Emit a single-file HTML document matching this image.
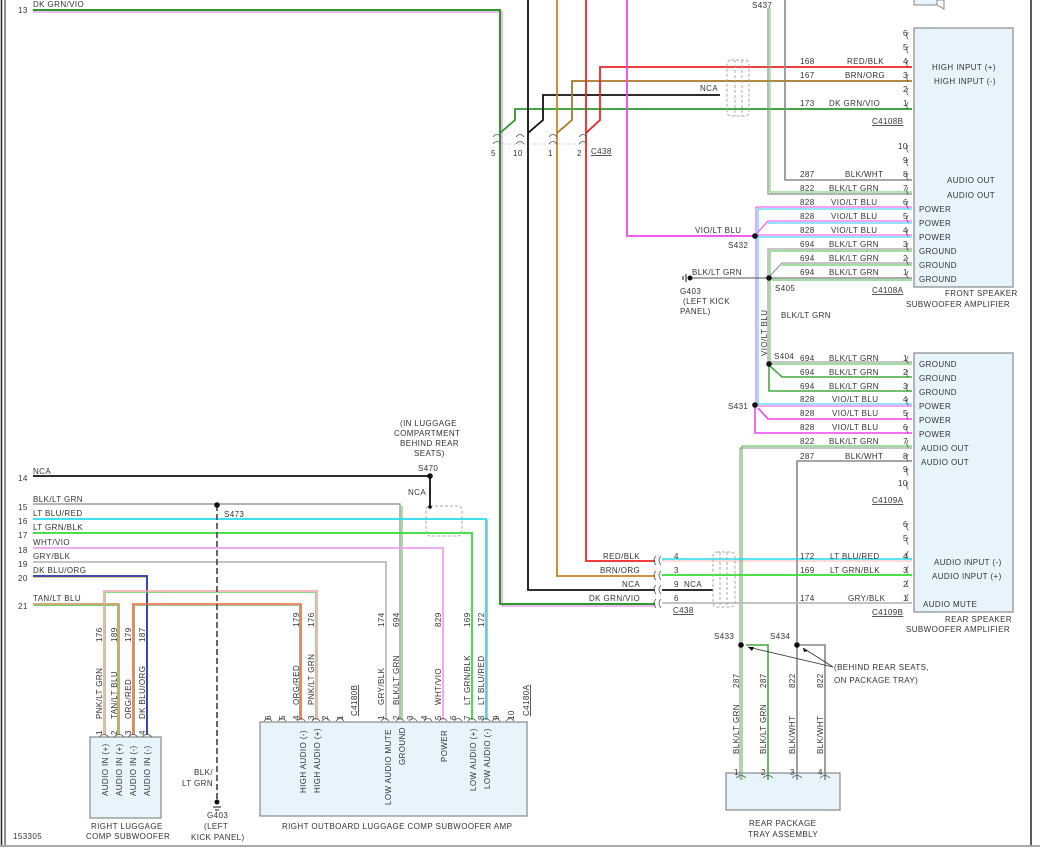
<!DOCTYPE html>
<html><head><meta charset="utf-8"><style>
html,body{margin:0;padding:0;background:#fff;}
svg{display:block;}
text{font-family:"Liberation Sans",sans-serif;font-size:8px;fill:#333;letter-spacing:0.4px;}
.u{text-decoration:underline;}
</style></head><body>
<svg width="1040" height="849" viewBox="0 0 1040 849" xmlns="http://www.w3.org/2000/svg">
<line x1="1.5" y1="0" x2="1.5" y2="846" stroke="#222" stroke-width="1.5"/>
<line x1="5" y1="0" x2="5" y2="846" stroke="#222" stroke-width="1"/>
<line x1="1031" y1="0" x2="1031" y2="846" stroke="#222" stroke-width="1.5"/>
<line x1="0" y1="846" x2="1040" y2="846" stroke="#aaa" stroke-width="2"/>

<rect x="914" y="-1" width="23" height="6" fill="#e8f4fb" stroke="#888"/>
<path d="M937 0 L944 0 L944 9 L937 5 Z" fill="#fff" stroke="#888"/>

<rect x="914" y="28" width="99" height="259" fill="#e8f4fb" stroke="#888" stroke-width="1.2"/>
<rect x="914" y="353" width="99" height="259" fill="#e8f4fb" stroke="#888" stroke-width="1.2"/>
<rect x="726" y="773" width="114" height="37" fill="#e8f4fb" stroke="#888" stroke-width="1.2"/>
<rect x="90" y="737" width="71" height="81" fill="#e8f4fb" stroke="#888" stroke-width="1.2"/>
<rect x="260" y="722" width="267" height="94" fill="#e8f4fb" stroke="#888" stroke-width="1.2"/>

<g fill="none" stroke-linejoin="miter">
<polyline points="33,12 502,12 502,606 655,606" stroke="#e070e0" stroke-width="1"/>
<polyline points="33,10 500,10 500,604 655,604" stroke="#2a9a2a" stroke-width="2"/>
<polyline points="500,133 515,120 515,109 912,109" stroke="#2a9a2a" stroke-width="1.8"/>
<polyline points="528,0 528,590 655,590" stroke="#111" stroke-width="1.8"/>
<polyline points="528,133 543,120 543,95 720,95" stroke="#111" stroke-width="1.8"/>
<polyline points="557,0 557,576 655,576" stroke="#c8841e" stroke-width="1.8"/>
<polyline points="557,133 572,120 572,81 912,81" stroke="#a6782a" stroke-width="1.8"/>
<polyline points="586,0 586,561 655,561" stroke="#ee2222" stroke-width="1.8"/>
<polyline points="586,133 600,120 600,67 912,67" stroke="#ee2222" stroke-width="1.8"/>
<polyline points="627,0 627,236 755,236" stroke="#ee44ee" stroke-width="1.8"/>
<polyline points="768,8 768,194 912,194" stroke="#888" stroke-width="1.2"/>
<polyline points="770,8 770,192 912,192" stroke="#66cc66" stroke-width="1"/>
<polyline points="785,0 785,180 912,180" stroke="#888" stroke-width="1.6"/>
<polyline points="756,405 756,207 912,207" stroke="#ee44ee" stroke-width="1"/>
<polyline points="758,405 758,209 912,209" stroke="#22ccee" stroke-width="1"/>
<polyline points="757,233 768,221 912,221" stroke="#ee44ee" stroke-width="1"/>
<polyline points="768,223 912,223" stroke="#22ccee" stroke-width="1"/>
<polyline points="757,235 912,235" stroke="#ee44ee" stroke-width="1"/>
<polyline points="757,237 912,237" stroke="#22ccee" stroke-width="1"/>
<polyline points="768,364 768,249 912,249" stroke="#888" stroke-width="1"/>
<polyline points="770,364 770,251 912,251" stroke="#44bb44" stroke-width="1"/>
<polyline points="770,276 782,263 912,263" stroke="#888" stroke-width="1"/>
<polyline points="782,265 912,265" stroke="#44bb44" stroke-width="1"/>
<polyline points="690,278 912,278" stroke="#777" stroke-width="1.2"/>
<polyline points="772,280 912,280" stroke="#44bb44" stroke-width="1"/>
<polyline points="769,362 912,362" stroke="#888" stroke-width="1"/>
<polyline points="769,364 912,364" stroke="#44bb44" stroke-width="1"/>
<polyline points="770,366 782,377 912,377" stroke="#44aa44" stroke-width="1.6"/>
<polyline points="769,364 769,391 912,391" stroke="#44aa44" stroke-width="1.6"/>
<polyline points="755,404 912,404" stroke="#22ccee" stroke-width="1"/>
<polyline points="755,406 912,406" stroke="#ee44ee" stroke-width="1"/>
<polyline points="758,408 768,419 912,419" stroke="#ee44ee" stroke-width="1.6"/>
<polyline points="755,405 755,433 912,433" stroke="#ee44ee" stroke-width="1.6"/>
<polyline points="912,448 740,448 740,780" stroke="#888" stroke-width="1"/>
<polyline points="912,446 742,446 742,780" stroke="#44bb44" stroke-width="1"/>
<polyline points="912,461 797,461 797,780" stroke="#888" stroke-width="1.6"/>
<polyline points="746,645 768,645 768,780" stroke="#44aa44" stroke-width="1.6"/>
<polyline points="800,645 825,645 825,780" stroke="#888" stroke-width="1.6"/>
<polyline points="662,559 912,559" stroke="#22ddee" stroke-width="1.6"/>
<polyline points="662,561 912,561" stroke="#ee7777" stroke-width="0.6"/>
<polyline points="662,575 912,575" stroke="#33dd33" stroke-width="1.8"/>
<polyline points="662,590 713,590" stroke="#111" stroke-width="1.8"/>
<polyline points="662,603 912,603" stroke="#bbb" stroke-width="1.8"/>

<polyline points="33,476 430,476 430,507" stroke="#111" stroke-width="1.8"/>
<polyline points="33,504 400,504 400,720" stroke="#888" stroke-width="1.2"/>
<polyline points="402,506 402,720" stroke="#44bb44" stroke-width="1"/>
<polyline points="33,519 486,519 486,720" stroke="#22ddee" stroke-width="1.8"/>
<polyline points="487.5,520 487.5,720" stroke="#ee7777" stroke-width="0.6"/>
<polyline points="33,533 472,533 472,720" stroke="#33dd33" stroke-width="1.8"/>
<polyline points="33,548 443,548 443,720" stroke="#f0a0f0" stroke-width="1.8"/>
<polyline points="33,562 386,562 386,720" stroke="#bbb" stroke-width="1.8"/>
<polyline points="33,576 147,576 147,735" stroke="#2233aa" stroke-width="1.8"/>
<polyline points="33,577.5 146,577.5" stroke="#e08a30" stroke-width="0.6"/>
<polyline points="33,604 119,604 119,735" stroke="#c8a060" stroke-width="1.8"/>
<polyline points="34,605.5 117.5,605.5 117.5,735" stroke="#44bb44" stroke-width="0.7"/>
<polyline points="104,735 104,591 317,591 317,720" stroke="#f4a0a0" stroke-width="1.6"/>
<polyline points="105.5,735 105.5,592.5 315.5,592.5 315.5,720" stroke="#66cc66" stroke-width="0.7"/>
<polyline points="133,735 133,604 301,604 301,720" stroke="#ee6633" stroke-width="1.6"/>
<polyline points="134.5,735 134.5,605.5 299.5,605.5 299.5,720" stroke="#338833" stroke-width="0.6"/>
<line x1="217" y1="505" x2="217" y2="800" stroke="#555" stroke-width="1.8" stroke-dasharray="6,3"/>

<rect x="727" y="60" width="22" height="56" rx="4" stroke="#aaa" stroke-dasharray="3,2"/>
<line x1="735" y1="60" x2="735" y2="116" stroke="#aaa" stroke-dasharray="3,2"/>
<line x1="742" y1="60" x2="742" y2="116" stroke="#aaa" stroke-dasharray="3,2"/>
<rect x="713" y="552" width="22" height="55" rx="4" stroke="#aaa" stroke-dasharray="3,2"/>
<line x1="720" y1="552" x2="720" y2="607" stroke="#aaa" stroke-dasharray="3,2"/>
<line x1="727" y1="552" x2="727" y2="607" stroke="#aaa" stroke-dasharray="3,2"/>
<rect x="426" y="506" width="36" height="30" rx="4" stroke="#aaa" stroke-dasharray="3,2"/>
<line x1="833" y1="667" x2="748" y2="647" stroke="#333" stroke-width="0.8"/>
<line x1="833" y1="667" x2="803" y2="648" stroke="#333" stroke-width="0.8"/>
<path d="M493,137 q4,-5 8,0 M516,137 q4,-5 8,0 M549,137 q4,-5 8,0 M579,137 q4,-5 8,0 M493,144 q4,-5 8,0 M516,144 q4,-5 8,0 M549,144 q4,-5 8,0 M579,144 q4,-5 8,0" stroke="#555" stroke-width="0.8"/>
<line x1="503" y1="144" x2="590" y2="144" stroke="#aaa" stroke-dasharray="3,2" stroke-width="0.6"/>
<path d="M656,556 q-4,4 0,9 M661,556 q-4,4 0,9 M656,571 q-4,4 0,9 M661,571 q-4,4 0,9 M656,585 q-4,4 0,9 M661,585 q-4,4 0,9 M656,599 q-4,4 0,9 M661,599 q-4,4 0,9" stroke="#555" stroke-width="0.8"/>
</g>
<g fill="#111">
<circle cx="755" cy="236" r="2.8"/><circle cx="769" cy="278" r="2.8"/>
<circle cx="769" cy="364" r="2.8"/><circle cx="755" cy="405" r="2.8"/>
<circle cx="741" cy="645" r="2.8"/><circle cx="797" cy="645" r="2.8"/>
<circle cx="430" cy="476" r="2.8"/><circle cx="217" cy="505" r="2.8"/>
<circle cx="430" cy="507" r="1.8"/>
<circle cx="690" cy="278" r="2.5"/><circle cx="217" cy="802" r="2.5"/>
<polygon points="748,647 754,647 752,651"/><polygon points="803,648 808,651 804,652"/>
</g>
<path d="M686,274 v8 M683,276 v4 M213,807 h8 M215,810 h4" stroke="#111" stroke-width="1"/>

<g fill="#555" font-size="9">
<text x="906" y="38">(</text><text x="906" y="52">(</text><text x="906" y="66">(</text><text x="906" y="80">(</text><text x="906" y="94">(</text><text x="906" y="108">(</text>
<text x="906" y="151">(</text><text x="906" y="165">(</text><text x="906" y="179">(</text><text x="906" y="193">(</text><text x="906" y="207">(</text><text x="906" y="221">(</text><text x="906" y="235">(</text><text x="906" y="249">(</text><text x="906" y="263">(</text><text x="906" y="277">(</text>
<text x="906" y="362">(</text><text x="906" y="376">(</text><text x="906" y="390">(</text><text x="906" y="404">(</text><text x="906" y="418">(</text><text x="906" y="432">(</text><text x="906" y="446">(</text><text x="906" y="460">(</text><text x="906" y="474">(</text><text x="906" y="488">(</text>
<text x="906" y="529">(</text><text x="906" y="543">(</text><text x="906" y="557">(</text><text x="906" y="572">(</text><text x="906" y="586">(</text><text x="906" y="600">(</text>
</g>
<g fill="none" stroke="#555" stroke-width="0.8">
<path d="M99,737 q5,-5 10,0 M114,737 q5,-5 10,0 M128,737 q5,-5 10,0 M142,737 q5,-5 10,0"/>
<path d="M264,721 q4,-5 8,0 M278,721 q4,-5 8,0 M297,721 q4,-5 8,0 M312,721 q4,-5 8,0 M322,721 q4,-5 8,0 M336,721 q4,-5 8,0 M381,721 q4,-5 8,0 M396,721 q4,-5 8,0 M409,721 q4,-5 8,0 M424,721 q4,-5 8,0 M439,721 q4,-5 8,0 M454,721 q4,-5 8,0 M468,721 q4,-5 8,0 M482,721 q4,-5 8,0 M492,721 q4,-5 8,0 M506,721 q4,-5 8,0"/>
<path d="M736,778 q5,-5 10,0 M763,778 q5,-5 10,0 M792,778 q5,-5 10,0 M820,778 q5,-5 10,0"/>
</g>

<text x="33" y="7">DK GRN/VIO</text><text x="18" y="13">13</text>
<text x="752" y="8">S437</text>
<text x="491" y="156">5</text><text x="513" y="156">10</text><text x="548" y="156">1</text><text x="577" y="156">2</text><text x="591" y="154" class="u">C438</text>
<text x="700" y="91">NCA</text>
<text x="800" y="64">168</text><text x="847" y="64">RED/BLK</text><text x="903" y="64">4</text>
<text x="800" y="78">167</text><text x="845" y="78">BRN/ORG</text><text x="903" y="78">3</text>
<text x="903" y="92">2</text>
<text x="800" y="106">173</text><text x="829" y="106">DK GRN/VIO</text><text x="903" y="106">1</text>
<text x="903" y="36">6</text><text x="903" y="50">5</text>
<text x="872" y="124" class="u">C4108B</text>
<text x="932" y="70">HIGH INPUT (+)</text><text x="934" y="84">HIGH INPUT (-)</text>
<text x="898" y="149">10</text><text x="903" y="163">9</text>
<text x="800" y="177">287</text><text x="845" y="177">BLK/WHT</text><text x="903" y="177">8</text>
<text x="800" y="191">822</text><text x="829" y="191">BLK/LT GRN</text><text x="903" y="191">7</text>
<text x="800" y="205">828</text><text x="831" y="205">VIO/LT BLU</text><text x="903" y="205">6</text>
<text x="800" y="219">828</text><text x="831" y="219">VIO/LT BLU</text><text x="903" y="219">5</text>
<text x="800" y="233">828</text><text x="831" y="233">VIO/LT BLU</text><text x="903" y="233">4</text>
<text x="800" y="247">694</text><text x="829" y="247">BLK/LT GRN</text><text x="903" y="247">3</text>
<text x="800" y="261">694</text><text x="829" y="261">BLK/LT GRN</text><text x="903" y="261">2</text>
<text x="800" y="275">694</text><text x="829" y="275">BLK/LT GRN</text><text x="903" y="275">1</text>
<text x="947" y="183">AUDIO OUT</text><text x="947" y="198">AUDIO OUT</text>
<text x="919" y="212">POWER</text><text x="919" y="226">POWER</text><text x="919" y="240">POWER</text>
<text x="919" y="254">GROUND</text><text x="919" y="268">GROUND</text><text x="919" y="282">GROUND</text>
<text x="872" y="293" class="u">C4108A</text>
<text x="945" y="296">FRONT SPEAKER</text><text x="906" y="307">SUBWOOFER AMPLIFIER</text>
<text x="695" y="233">VIO/LT BLU</text><text x="728" y="248">S432</text>
<text x="692" y="275">BLK/LT GRN</text><text x="775" y="291">S405</text>
<text x="680" y="294">G403</text><text x="683" y="304">(LEFT KICK</text><text x="680" y="314">PANEL)</text>
<text x="781" y="318">BLK/LT GRN</text>
<text transform="translate(767,356) rotate(-90)">VIO/LT BLU</text>

<text x="774" y="359">S404</text>
<text x="800" y="361">694</text><text x="829" y="361">BLK/LT GRN</text><text x="903" y="361">1</text>
<text x="800" y="375">694</text><text x="829" y="375">BLK/LT GRN</text><text x="903" y="375">2</text>
<text x="800" y="389">694</text><text x="829" y="389">BLK/LT GRN</text><text x="903" y="389">3</text>
<text x="728" y="409">S431</text>
<text x="800" y="402">828</text><text x="832" y="402">VIO/LT BLU</text><text x="903" y="402">4</text>
<text x="800" y="416">828</text><text x="832" y="416">VIO/LT BLU</text><text x="903" y="416">5</text>
<text x="800" y="430">828</text><text x="832" y="430">VIO/LT BLU</text><text x="903" y="430">6</text>
<text x="800" y="444">822</text><text x="829" y="444">BLK/LT GRN</text><text x="903" y="444">7</text>
<text x="800" y="459">287</text><text x="845" y="459">BLK/WHT</text><text x="903" y="459">8</text>
<text x="903" y="472">9</text><text x="898" y="486">10</text>
<text x="919" y="367">GROUND</text><text x="919" y="381">GROUND</text><text x="919" y="395">GROUND</text>
<text x="919" y="409">POWER</text><text x="919" y="423">POWER</text><text x="919" y="437">POWER</text>
<text x="921" y="451">AUDIO OUT</text><text x="921" y="465">AUDIO OUT</text>
<text x="872" y="503" class="u">C4109A</text>
<text x="903" y="527">6</text><text x="903" y="541">5</text>
<text x="800" y="559">172</text><text x="830" y="559">LT BLU/RED</text><text x="903" y="559">4</text>
<text x="800" y="573">169</text><text x="830" y="573">LT GRN/BLK</text><text x="903" y="573">3</text>
<text x="903" y="587">2</text>
<text x="800" y="601">174</text><text x="848" y="601">GRY/BLK</text><text x="903" y="601">1</text>
<text x="934" y="565">AUDIO INPUT (-)</text><text x="932" y="579">AUDIO INPUT (+)</text>
<text x="923" y="607">AUDIO MUTE</text>
<text x="872" y="615" class="u">C4109B</text>
<text x="945" y="622">REAR SPEAKER</text><text x="906" y="632">SUBWOOFER AMPLIFIER</text>
<text x="603" y="559">RED/BLK</text><text x="600" y="573">BRN/ORG</text><text x="622" y="587">NCA</text><text x="589" y="601">DK GRN/VIO</text>
<text x="674" y="559">4</text><text x="674" y="573">3</text><text x="674" y="587">9</text><text x="684" y="587">NCA</text><text x="674" y="601">6</text>
<text x="673" y="613" class="u">C438</text>
<text x="714" y="639">S433</text><text x="770" y="639">S434</text>
<text x="834" y="670">(BEHIND REAR SEATS,</text><text x="834" y="683">ON PACKAGE TRAY)</text>
<text transform="translate(739,688) rotate(-90)">287</text>
<text transform="translate(766,688) rotate(-90)">287</text>
<text transform="translate(795,688) rotate(-90)">822</text>
<text transform="translate(823,688) rotate(-90)">822</text>
<text transform="translate(739,754) rotate(-90)">BLK/LT GRN</text>
<text transform="translate(766,754) rotate(-90)">BLK/LT GRN</text>
<text transform="translate(795,754) rotate(-90)">BLK/WHT</text>
<text transform="translate(823,754) rotate(-90)">BLK/WHT</text>
<text x="734" y="775">1</text><text x="761" y="775">2</text><text x="790" y="775">3</text><text x="818" y="775">4</text>
<text x="749" y="826">REAR PACKAGE</text><text x="748" y="837">TRAY ASSEMBLY</text>

<text x="400" y="426">(IN LUGGAGE</text><text x="394" y="436">COMPARTMENT</text><text x="400" y="446">BEHIND REAR</text><text x="414" y="456">SEATS)</text>
<text x="418" y="471">S470</text><text x="408" y="495">NCA</text>
<text x="33" y="474">NCA</text><text x="18" y="481">14</text>
<text x="33" y="502">BLK/LT GRN</text><text x="18" y="510">15</text>
<text x="224" y="517">S473</text>
<text x="33" y="516">LT BLU/RED</text><text x="18" y="524">16</text>
<text x="33" y="530">LT GRN/BLK</text><text x="18" y="538">17</text>
<text x="33" y="545">WHT/VIO</text><text x="18" y="553">18</text>
<text x="33" y="559">GRY/BLK</text><text x="18" y="567">19</text>
<text x="33" y="573">DK BLU/ORG</text><text x="18" y="581">20</text>
<text x="33" y="601">TAN/LT BLU</text><text x="18" y="609">21</text>
<g>
<text transform="translate(102,642) rotate(-90)">176</text>
<text transform="translate(117,642) rotate(-90)">189</text>
<text transform="translate(131,642) rotate(-90)">179</text>
<text transform="translate(145,642) rotate(-90)">187</text>
<text transform="translate(102,719) rotate(-90)">PNK/LT GRN</text>
<text transform="translate(117,719) rotate(-90)">TAN/LT BLU</text>
<text transform="translate(131,719) rotate(-90)">ORG/RED</text>
<text transform="translate(145,719) rotate(-90)">DK BLU/ORG</text>
<text transform="translate(102,735) rotate(-90)">1</text><text transform="translate(117,735) rotate(-90)">2</text>
<text transform="translate(131,735) rotate(-90)">3</text><text transform="translate(145,735) rotate(-90)">4</text>
<text transform="translate(108,796) rotate(-90)">AUDIO IN (+)</text>
<text transform="translate(122,796) rotate(-90)">AUDIO IN (+)</text>
<text transform="translate(136,796) rotate(-90)">AUDIO IN (-)</text>
<text transform="translate(150,796) rotate(-90)">AUDIO IN (-)</text>
</g>
<text x="91" y="829">RIGHT LUGGAGE</text><text x="86" y="839">COMP SUBWOOFER</text>
<text x="13" y="839">153305</text>
<text x="194" y="775">BLK/</text><text x="182" y="786">LT GRN</text>
<text x="207" y="818">G403</text><text x="204" y="829">(LEFT</text><text x="191" y="840">KICK PANEL)</text>
<g>
<text transform="translate(299,627) rotate(-90)">179</text>
<text transform="translate(314,627) rotate(-90)">176</text>
<text transform="translate(384,627) rotate(-90)">174</text>
<text transform="translate(399,627) rotate(-90)">694</text>
<text transform="translate(441,627) rotate(-90)">829</text>
<text transform="translate(470,627) rotate(-90)">169</text>
<text transform="translate(484,627) rotate(-90)">172</text>
<text transform="translate(299,705) rotate(-90)">ORG/RED</text>
<text transform="translate(314,705) rotate(-90)">PNK/LT GRN</text>
<text transform="translate(384,705) rotate(-90)">GRY/BLK</text>
<text transform="translate(399,705) rotate(-90)">BLK/LT GRN</text>
<text transform="translate(441,705) rotate(-90)">WHT/VIO</text>
<text transform="translate(470,705) rotate(-90)">LT GRN/BLK</text>
<text transform="translate(484,705) rotate(-90)">LT BLU/RED</text>
<text transform="translate(357,716) rotate(-90)" class="u">C4180B</text>
<text transform="translate(529,716) rotate(-90)" class="u">C4180A</text>
<text transform="translate(271,720) rotate(-90)">6</text><text transform="translate(285,720) rotate(-90)">5</text>
<text transform="translate(299,720) rotate(-90)">4</text><text transform="translate(314,720) rotate(-90)">3</text>
<text transform="translate(328,720) rotate(-90)">2</text><text transform="translate(343,720) rotate(-90)">1</text>
<text transform="translate(384,720) rotate(-90)">1</text><text transform="translate(399,720) rotate(-90)">2</text>
<text transform="translate(413,720) rotate(-90)">3</text><text transform="translate(427,720) rotate(-90)">4</text>
<text transform="translate(441,720) rotate(-90)">5</text><text transform="translate(456,720) rotate(-90)">6</text>
<text transform="translate(470,720) rotate(-90)">7</text><text transform="translate(484,720) rotate(-90)">8</text>
<text transform="translate(499,720) rotate(-90)">9</text><text transform="translate(514,720) rotate(-90)">10</text>
<text transform="translate(306,793) rotate(-90)">HIGH AUDIO (-)</text>
<text transform="translate(320,793) rotate(-90)">HIGH AUDIO (+)</text>
<text transform="translate(391,805) rotate(-90)">LOW AUDIO MUTE</text>
<text transform="translate(405,765) rotate(-90)">GROUND</text>
<text transform="translate(447,762) rotate(-90)">POWER</text>
<text transform="translate(476,791) rotate(-90)">LOW AUDIO (+)</text>
<text transform="translate(490,789) rotate(-90)">LOW AUDIO (-)</text>
</g>
<text x="282" y="829">RIGHT OUTBOARD LUGGAGE COMP SUBWOOFER AMP</text>
</svg>
</body></html>
